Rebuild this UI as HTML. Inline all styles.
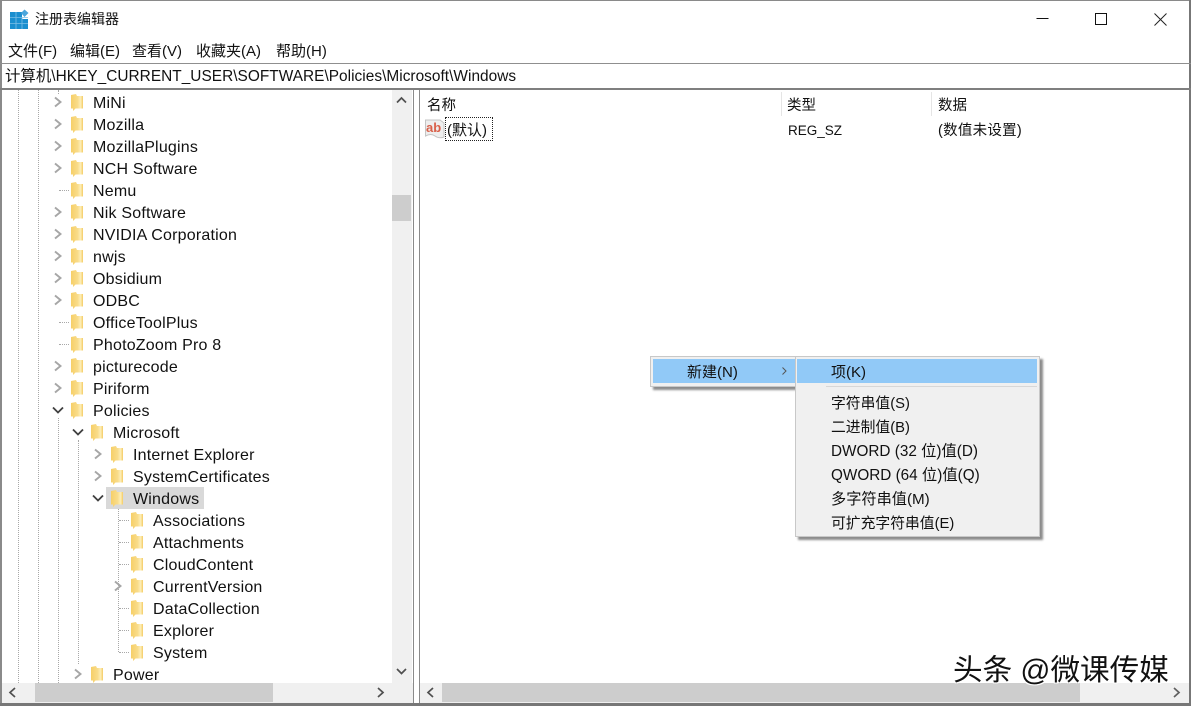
<!DOCTYPE html>
<html lang="zh"><head><meta charset="utf-8"><title>注册表编辑器</title>
<style>
html,body{margin:0;padding:0;background:#fff}
#w{position:relative;width:1191px;height:706px;overflow:hidden;background:#fff;font-family:"Liberation Sans","Noto Sans CJK SC",sans-serif;font-size:15.4px;color:#111}
#w div,#w svg.a{position:absolute}
.t{white-space:nowrap;line-height:22px;height:22px;margin-top:2px}
.n{font-size:16px;letter-spacing:.2px;margin-top:3.500px}
.m{font-size:14.5px;margin-top:3.500px}
.l{font-size:15.3px;margin-top:3.500px}
.d{border-left:1px dotted #a8a8a8;width:0}
.h{border-top:1px dotted #a8a8a8;height:0;width:10px}
.bar{background:#f0f0f0}
.th{background:#cdcdcd}
</style></head><body><div id="w">
<svg width="0" height="0" style="position:absolute"><defs>
<linearGradient id="g" x1="0" y1="0" x2="1" y2="0"><stop offset="0" stop-color="#f6cf68"/><stop offset=".55" stop-color="#f9dc8a"/><stop offset=".8" stop-color="#fdeeb8"/><stop offset="1" stop-color="#f4cb62"/></linearGradient>
<symbol id="f" viewBox="0 0 14 18"><path d="M1 2L6 1L7 3H13V15.500H5.500L3 18V15.500H1Z" fill="url(#g)"/></symbol>
<symbol id="r" viewBox="0 0 10 12"><path d="M2 1.500L7.500 6L2 10.500" fill="none" stroke="#a6a6a6" stroke-width="1.900"/></symbol>
<symbol id="o" viewBox="0 0 12 10"><path d="M1 2.500L6 7.500L11 2.500" fill="none" stroke="#404040" stroke-width="1.800"/></symbol>
</defs></svg>

<!-- outer borders -->
<div style="left:0;top:0;width:1191px;height:1px;background:#8a8a8a"></div>
<div style="left:0;top:0;width:2px;height:706px;background:#8a8a8a"></div>
<div style="left:1189px;top:0;width:2px;height:706px;background:#777"></div>
<div style="left:0;top:703px;width:1191px;height:3px;background:#777"></div>

<!-- title -->
<svg class="a" style="left:10px;top:9px" width="20" height="21" viewBox="0 0 20 21">
<path d="M0 3H12V10H18V20H0Z" fill="#1b8fcf"/>
<path d="M0 8.500H18M0 14.500H18M6 3V20M12 9V20" stroke="#7cc0e6" stroke-width=".8"/>
<path d="M14.500 .5L18.500 4L14.500 8L11 4Z" fill="#4aa6dc"/></svg>
<div class="t" style="left:35px;top:6px;font-size:14px">注册表编辑器</div>
<svg class="a" style="left:1030px;top:0" width="161" height="40" viewBox="0 0 161 40" shape-rendering="crispEdges">
<rect x="6.500" y="18" width="12" height="1" fill="#111"/>
<rect x="65.500" y="13.500" width="11" height="11" fill="none" stroke="#111"/>
</svg>
<svg class="a" style="left:1154px;top:13px" width="13" height="13" viewBox="0 0 13 13"><path d="M.5.500L12.500 12.500M12.500.500L.5 12.500" stroke="#222" stroke-width="1"/></svg>

<!-- menu -->
<div class="t" style="left:8px;top:39px;font-size:15px">文件(F)</div>
<div class="t" style="left:70px;top:39px;font-size:15px">编辑(E)</div>
<div class="t" style="left:132px;top:39px;font-size:15px">查看(V)</div>
<div class="t" style="left:196px;top:39px;font-size:15px">收藏夹(A)</div>
<div class="t" style="left:276px;top:39px;font-size:15px">帮助(H)</div>

<!-- address -->
<div style="left:0;top:63px;width:1191px;height:1px;background:#8f8f8f"></div>
<div style="left:0;top:88px;width:1191px;height:2px;background:#7f7f7f"></div>
<div class="t" style="left:5px;top:64px;letter-spacing:.035px">计算机\HKEY_CURRENT_USER\SOFTWARE\Policies\Microsoft\Windows</div>

<!-- tree lines -->
<div class="d" style="left:18px;top:90px;height:593px"></div>
<div class="d" style="left:38px;top:90px;height:593px"></div>
<div class="d" style="left:58px;top:90px;height:4px"></div>
<div class="d" style="left:58px;top:418px;height:265px"></div>
<div class="d" style="left:78px;top:440px;height:224px"></div>
<div class="d" style="left:118px;top:508px;height:144px"></div>
<div class="h" style="left:59px;top:190px"></div>
<div class="h" style="left:59px;top:322px"></div>
<div class="h" style="left:59px;top:344px"></div>
<div class="h" style="left:119px;top:520px"></div>
<div class="h" style="left:119px;top:542px"></div>
<div class="h" style="left:119px;top:564px"></div>
<div class="h" style="left:119px;top:608px"></div>
<div class="h" style="left:119px;top:630px"></div>
<div class="h" style="left:119px;top:652px"></div>

<!-- selected -->
<div style="left:106px;top:487px;width:98px;height:22px;background:#d9d9d9"></div>

<!-- folders -->
<svg class="a" style="left:70px;top:93px" width="14" height="18"><use href="#f"/></svg>
<svg class="a" style="left:70px;top:115px" width="14" height="18"><use href="#f"/></svg>
<svg class="a" style="left:70px;top:137px" width="14" height="18"><use href="#f"/></svg>
<svg class="a" style="left:70px;top:159px" width="14" height="18"><use href="#f"/></svg>
<svg class="a" style="left:70px;top:181px" width="14" height="18"><use href="#f"/></svg>
<svg class="a" style="left:70px;top:203px" width="14" height="18"><use href="#f"/></svg>
<svg class="a" style="left:70px;top:225px" width="14" height="18"><use href="#f"/></svg>
<svg class="a" style="left:70px;top:247px" width="14" height="18"><use href="#f"/></svg>
<svg class="a" style="left:70px;top:269px" width="14" height="18"><use href="#f"/></svg>
<svg class="a" style="left:70px;top:291px" width="14" height="18"><use href="#f"/></svg>
<svg class="a" style="left:70px;top:313px" width="14" height="18"><use href="#f"/></svg>
<svg class="a" style="left:70px;top:335px" width="14" height="18"><use href="#f"/></svg>
<svg class="a" style="left:70px;top:357px" width="14" height="18"><use href="#f"/></svg>
<svg class="a" style="left:70px;top:379px" width="14" height="18"><use href="#f"/></svg>
<svg class="a" style="left:70px;top:401px" width="14" height="18"><use href="#f"/></svg>
<svg class="a" style="left:90px;top:423px" width="14" height="18"><use href="#f"/></svg>
<svg class="a" style="left:110px;top:445px" width="14" height="18"><use href="#f"/></svg>
<svg class="a" style="left:110px;top:467px" width="14" height="18"><use href="#f"/></svg>
<svg class="a" style="left:110px;top:489px" width="14" height="18"><use href="#f"/></svg>
<svg class="a" style="left:130px;top:511px" width="14" height="18"><use href="#f"/></svg>
<svg class="a" style="left:130px;top:533px" width="14" height="18"><use href="#f"/></svg>
<svg class="a" style="left:130px;top:555px" width="14" height="18"><use href="#f"/></svg>
<svg class="a" style="left:130px;top:577px" width="14" height="18"><use href="#f"/></svg>
<svg class="a" style="left:130px;top:599px" width="14" height="18"><use href="#f"/></svg>
<svg class="a" style="left:130px;top:621px" width="14" height="18"><use href="#f"/></svg>
<svg class="a" style="left:130px;top:643px" width="14" height="18"><use href="#f"/></svg>
<svg class="a" style="left:90px;top:665px" width="14" height="18"><use href="#f"/></svg>

<!-- arrows -->
<svg class="a" style="left:53px;top:96px" width="10" height="12"><use href="#r"/></svg>
<svg class="a" style="left:53px;top:118px" width="10" height="12"><use href="#r"/></svg>
<svg class="a" style="left:53px;top:140px" width="10" height="12"><use href="#r"/></svg>
<svg class="a" style="left:53px;top:162px" width="10" height="12"><use href="#r"/></svg>
<svg class="a" style="left:53px;top:206px" width="10" height="12"><use href="#r"/></svg>
<svg class="a" style="left:53px;top:228px" width="10" height="12"><use href="#r"/></svg>
<svg class="a" style="left:53px;top:250px" width="10" height="12"><use href="#r"/></svg>
<svg class="a" style="left:53px;top:272px" width="10" height="12"><use href="#r"/></svg>
<svg class="a" style="left:53px;top:294px" width="10" height="12"><use href="#r"/></svg>
<svg class="a" style="left:53px;top:360px" width="10" height="12"><use href="#r"/></svg>
<svg class="a" style="left:53px;top:382px" width="10" height="12"><use href="#r"/></svg>
<svg class="a" style="left:52px;top:405px" width="12" height="10"><use href="#o"/></svg>
<svg class="a" style="left:72px;top:427px" width="12" height="10"><use href="#o"/></svg>
<svg class="a" style="left:93px;top:448px" width="10" height="12"><use href="#r"/></svg>
<svg class="a" style="left:93px;top:470px" width="10" height="12"><use href="#r"/></svg>
<svg class="a" style="left:92px;top:493px" width="12" height="10"><use href="#o"/></svg>
<svg class="a" style="left:113px;top:580px" width="10" height="12"><use href="#r"/></svg>
<svg class="a" style="left:73px;top:668px" width="10" height="12"><use href="#r"/></svg>

<!-- tree labels -->
<div class="t n" style="left:93px;top:89px">MiNi</div>
<div class="t n" style="left:93px;top:111px">Mozilla</div>
<div class="t n" style="left:93px;top:133px">MozillaPlugins</div>
<div class="t n" style="left:93px;top:155px">NCH Software</div>
<div class="t n" style="left:93px;top:177px">Nemu</div>
<div class="t n" style="left:93px;top:199px">Nik Software</div>
<div class="t n" style="left:93px;top:221px">NVIDIA Corporation</div>
<div class="t n" style="left:93px;top:243px">nwjs</div>
<div class="t n" style="left:93px;top:265px">Obsidium</div>
<div class="t n" style="left:93px;top:287px">ODBC</div>
<div class="t n" style="left:93px;top:309px">OfficeToolPlus</div>
<div class="t n" style="left:93px;top:331px">PhotoZoom Pro 8</div>
<div class="t n" style="left:93px;top:353px">picturecode</div>
<div class="t n" style="left:93px;top:375px">Piriform</div>
<div class="t n" style="left:93px;top:397px">Policies</div>
<div class="t n" style="left:113px;top:419px">Microsoft</div>
<div class="t n" style="left:133px;top:441px">Internet Explorer</div>
<div class="t n" style="left:133px;top:463px">SystemCertificates</div>
<div class="t n" style="left:133px;top:485px">Windows</div>
<div class="t n" style="left:153px;top:507px">Associations</div>
<div class="t n" style="left:153px;top:529px">Attachments</div>
<div class="t n" style="left:153px;top:551px">CloudContent</div>
<div class="t n" style="left:153px;top:573px">CurrentVersion</div>
<div class="t n" style="left:153px;top:595px">DataCollection</div>
<div class="t n" style="left:153px;top:617px">Explorer</div>
<div class="t n" style="left:153px;top:639px">System</div>
<div class="t n" style="left:113px;top:661px">Power</div>

<!-- left scrollbars -->
<div class="bar" style="left:392px;top:90px;width:20px;height:593px"></div>
<div class="th" style="left:392px;top:195px;width:19px;height:26px"></div>
<svg class="a" style="left:396px;top:96px" width="11" height="9" viewBox="0 0 11 9"><path d="M1 6.500L5.500 2L10 6.500" fill="none" stroke="#505050" stroke-width="1.700"/></svg>
<svg class="a" style="left:396px;top:667px" width="11" height="9" viewBox="0 0 11 9"><path d="M1 2L5.500 6.500L10 2" fill="none" stroke="#505050" stroke-width="1.700"/></svg>
<div class="bar" style="left:2px;top:683px;width:411px;height:20px"></div>
<div class="th" style="left:35px;top:683px;width:238px;height:19px"></div>
<svg class="a" style="left:8px;top:687px" width="9" height="11" viewBox="0 0 9 11"><path d="M7 1L2 5.500L7 10" fill="none" stroke="#505050" stroke-width="1.700"/></svg>
<svg class="a" style="left:376px;top:687px" width="9" height="11" viewBox="0 0 9 11"><path d="M2 1L7 5.500L2 10" fill="none" stroke="#505050" stroke-width="1.700"/></svg>

<!-- splitter -->
<div style="left:413px;top:90px;width:1px;height:613px;background:#8a8a8a"></div>
<div style="left:419px;top:90px;width:1px;height:613px;background:#8a8a8a"></div>

<!-- right pane -->
<div style="left:781px;top:92px;width:1px;height:24px;background:#e5e5e5"></div>
<div style="left:931px;top:92px;width:1px;height:24px;background:#e5e5e5"></div>
<div class="t m" style="left:427px;top:91px">名称</div>
<div class="t m" style="left:787px;top:91px">类型</div>
<div class="t m" style="left:938px;top:91px">数据</div>
<svg class="a" style="left:425px;top:119px" width="20" height="20" viewBox="0 0 20 20">
<path d="M.5 1H15L19 4V18Q14 20 10 17T.5 17Z" fill="#eeeeee" stroke="#c4c4c4"/>
<text x="1" y="13" font-family="Liberation Sans" font-size="13" font-weight="bold" fill="#d9604a">ab</text></svg>
<div style="left:445px;top:117px;width:46px;height:22px;border:1px dotted #222"></div>
<div class="t m" style="left:447px;top:116px;font-size:15px">(默认)</div>
<div class="t" style="left:788px;top:118px;font-size:13.5px">REG_SZ</div>
<div class="t" style="left:938px;top:118px;font-size:14.5px;letter-spacing:.25px">(数值未设置)</div>

<!-- right scrollbar -->
<div class="bar" style="left:420px;top:683px;width:769px;height:20px"></div>
<div class="th" style="left:442px;top:683px;width:638px;height:19px"></div>
<svg class="a" style="left:426px;top:687px" width="9" height="11" viewBox="0 0 9 11"><path d="M7 1L2 5.500L7 10" fill="none" stroke="#505050" stroke-width="1.700"/></svg>
<svg class="a" style="left:1172px;top:687px" width="9" height="11" viewBox="0 0 9 11"><path d="M2 1L7 5.500L2 10" fill="none" stroke="#606060" stroke-width="1.700"/></svg>

<!-- context menu -->
<div style="left:650px;top:356px;width:145px;height:29px;background:#f0f0f0;border:1px solid #c8c8c8;box-shadow:3px 3px 2px #8c8c8c"></div>
<div style="left:653px;top:359px;width:143px;height:24px;background:#91c9f7"></div>
<div class="t m" style="left:687px;top:358px;font-size:15px">新建(N)</div>
<svg class="a" style="left:781px;top:366px" width="7" height="10" viewBox="0 0 7 10"><path d="M1.500 1.500L5 5L1.500 8.500" fill="none" stroke="#555" stroke-width="1"/></svg>

<div style="left:795px;top:356px;width:243px;height:179px;background:#f0f0f0;border:1px solid #c8c8c8;box-shadow:3px 3px 2px #8c8c8c"></div>
<div style="left:797px;top:359px;width:240px;height:24px;background:#91c9f7"></div>
<div style="left:826px;top:386px;width:211px;height:1px;background:#d7d7d7"></div>
<div class="t m" style="left:831px;top:358px;font-size:15px">项(K)</div>
<div class="t m" style="left:831px;top:389px;font-size:14.8px">字符串值(S)</div>
<div class="t m" style="left:831px;top:413px;font-size:14.8px">二进制值(B)</div>
<div class="t l" style="left:831px;top:437px">DWORD (32 位)值(D)</div>
<div class="t l" style="left:831px;top:461px">QWORD (64 位)值(Q)</div>
<div class="t m" style="left:831px;top:485px;font-size:15.2px">多字符串值(M)</div>
<div class="t m" style="left:831px;top:509px;font-size:14.8px">可扩充字符串值(E)</div>

<!-- watermark -->
<div class="t" style="left:953px;top:653px;height:32px;line-height:32px;font-size:29.600px;color:#111;text-shadow:1px 1px 0 #fff,-1px -1px 0 #fff,1px -1px 0 #fff,-1px 1px 0 #fff">头条 @微课传媒</div>
</div></body></html>
